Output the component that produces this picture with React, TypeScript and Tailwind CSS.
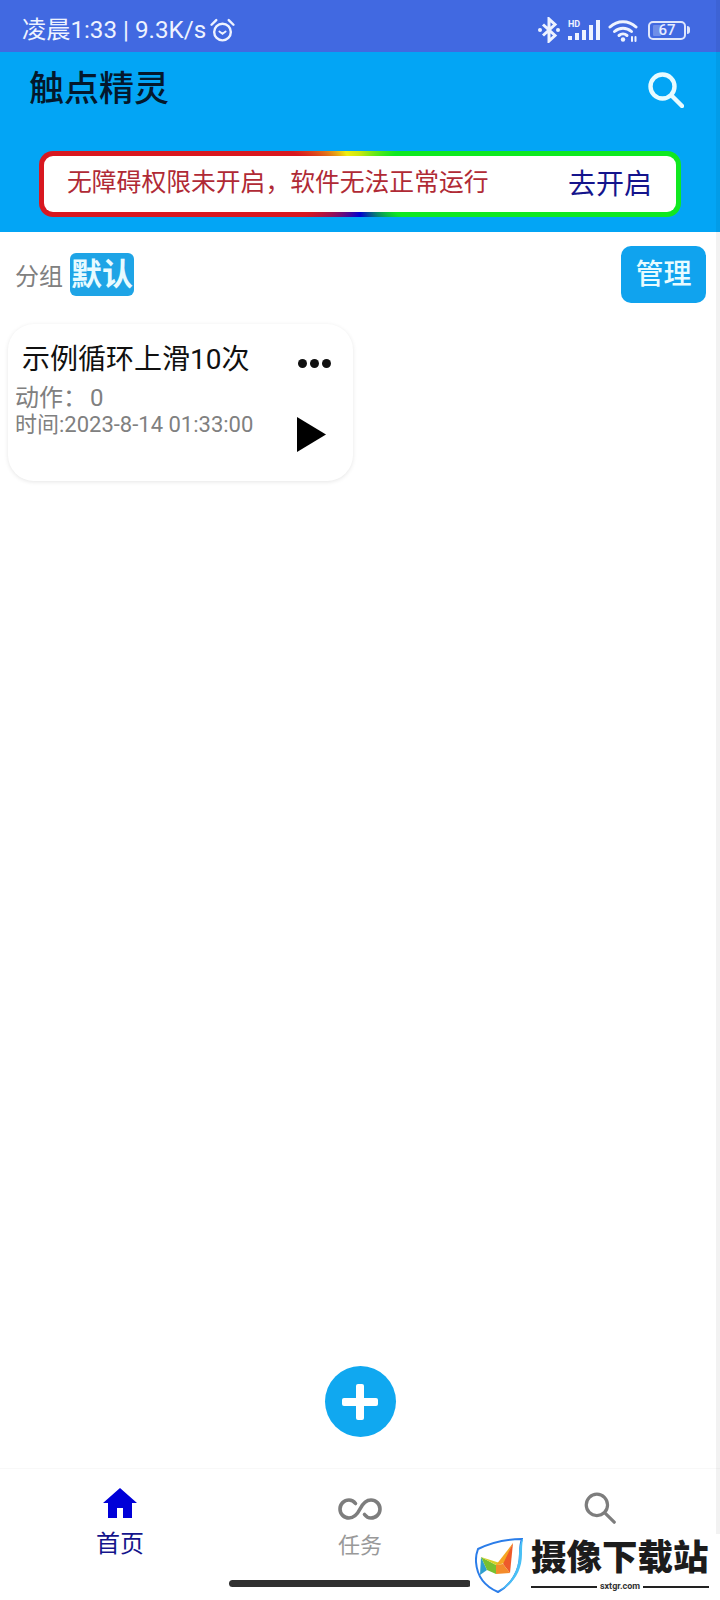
const CJK = "font-['Roboto','Noto_Sans_CJK_SC',sans-serif]"

function SearchGlyph({ size, color, stroke }: { size: number; color: string; stroke: number }) {
  return (
    <svg width={size} height={size} viewBox="0 0 36 36" fill="none" stroke={color} strokeWidth={stroke} strokeLinecap="round">
      <circle cx="14.5" cy="14.5" r="12" />
      <path d="M24 24 34 34" />
    </svg>
  )
}

function AlarmIcon() {
  return (
    <svg width="25" height="25" viewBox="0 0 24 24" fill="none" stroke="#eef3ff" strokeWidth="2.3" strokeLinecap="round">
      <circle cx="12" cy="13.5" r="8" />
      <path d="M1.5 6.5 6 2M22.5 6.5 18 2" />
      <path d="M9 13l3 2.2L15 13" strokeWidth="1.8" />
    </svg>
  )
}

function BluetoothIcon() {
  return (
    <svg width="22" height="26" viewBox="0 0 22 26" fill="none" stroke="#eef3ff" strokeWidth="3">
      <path d="M5 7.5l12 11-6 5.5V2l6 5.5L5 18.500" />
      <circle cx="2" cy="13" r="2" fill="#eef3ff" stroke="none" />
      <circle cx="20" cy="13" r="2" fill="#eef3ff" stroke="none" />
    </svg>
  )
}

function SignalIcon() {
  return (
    <div className="relative w-[32px] h-[20px]">
      <span className="absolute left-0 top-0 text-[9px] leading-none font-bold text-[#eef3ff]">HD</span>
      <div className="absolute inset-0 flex items-end justify-end gap-[3px]">
        <span className="w-[4px] h-[4px] bg-[#eef3ff]" />
        <span className="w-[4px] h-[7px] bg-[#eef3ff]" />
        <span className="w-[4px] h-[10px] bg-[#eef3ff]" />
        <span className="w-[4px] h-[15px] bg-[#eef3ff]" />
        <span className="w-[4px] h-[20px] bg-[#eef3ff]" />
      </div>
    </div>
  )
}

function WifiIcon() {
  return (
    <svg width="30" height="23" viewBox="0 0 30 23" fill="none" stroke="#eef3ff" strokeWidth="3" strokeLinecap="round">
      <path d="M2 8C9.500 1 20.500 1 28 8" />
      <path d="M6.500 12.500c5-4.500 12-4.500 17 0" />
      <path d="M11 16.500c2.300-2 5.700-2 8 0" />
      <circle cx="15" cy="20.500" r="2.200" fill="#eef3ff" stroke="none" />
      <path d="M24 18v4M27.500 18v4" strokeWidth="2" />
    </svg>
  )
}

function BatteryIcon() {
  return (
    <div className="flex items-center gap-[1px]">
      <div className="w-[38px] h-[19px] rounded-[5px] border-2 border-[#dfe6fb] flex items-center justify-center relative">
        <span className="absolute left-[3px] top-[2px] bottom-[2px] w-[8px] bg-[#6f8ee8] rounded-[1px]" />
        <span className="relative text-[15px] leading-none font-medium text-[#e6ecff]">67</span>
      </div>
      <span className="w-[3px] h-[8px] rounded-r-sm bg-[#dfe6fb]" />
    </div>
  )
}

function PlayIcon() {
  return (
    <svg width="29" height="35" viewBox="0 0 29 35">
      <path d="M0 0 29 17.500 0 35z" fill="#000" />
    </svg>
  )
}

function PlusGlyph() {
  return (
    <svg width="36" height="36" viewBox="0 0 36 36">
      <rect x="0" y="14" width="36" height="8" rx="2" fill="#fff" />
      <rect x="14" y="0" width="8" height="36" rx="2" fill="#fff" />
    </svg>
  )
}

function HomeIcon() {
  return (
    <svg width="34" height="31" viewBox="0 0 34 31">
      <path d="M17 0 34 15H29V30H20V20H14V30H5V15H0z" fill="#0000d8" />
    </svg>
  )
}

function InfinityIcon() {
  return (
    <svg width="44" height="24" viewBox="0 0 44 24" fill="none" stroke="#7d7d7d" strokeWidth="3.6" strokeLinecap="round">
      <path d="M17.500 6.500C16 4.500 13.500 3 11 3 6 3 2 7 2 12s4 9 9 9c6 0 9-5 11-9s5-9 11-9c5 0 9 4 9 9s-4 9-9 9c-2.500 0-5-1.500-6.500-3.500" />
    </svg>
  )
}

function ShieldLogo() {
  return (
    <svg width="48" height="56" viewBox="0 0 48 56">
      <path d="M3 11C15 5 32 1 47 1c-2 5-2 10-2 15 0 17-9 31-22 38C9 48 2 38 1 24c-.3-5 .5-9 2-13z" fill="#fff" stroke="#2b7de9" strokeWidth="2" />
      <path d="M47 1c-2 5-3 10-3 15 0 16-8 29-20 37 14-6 23-20 23-37 0-5 0-10 1-15z" fill="#49c0f5" />
      <path d="M6 19 5 37l7-5z" fill="#2f9fcf" />
      <path d="M6 19l6 13 9 4V27z" fill="#78c030" />
      <path d="M6 19l15 8 7-1z" fill="#d6cf28" />
      <path d="M21 27 38 5 30 25z" fill="#f6a623" />
      <path d="M38 5l-3 30-7-9z" fill="#ee5a2a" />
      <path d="M21 27l7-1 7 9-14 1z" fill="#f48b2a" />
    </svg>
  )
}

export default function App() {
  return (
    <div className={`w-[720px] h-[1600px] flex flex-col bg-white relative overflow-hidden ${CJK}`}>
      {/* status bar */}
      <div className="h-[52px] bg-[#4169e1] flex items-center justify-between pl-[22px] pr-[30px] pt-[8px] text-[#eef3ff]">
        <div className="flex items-center gap-[4px] text-[24.200px] leading-none">
          <span>凌晨1:33 | 9.3K/s</span>
          <AlarmIcon />
        </div>
        <div className="flex items-center gap-[8px]">
          <BluetoothIcon />
          <SignalIcon />
          <WifiIcon />
          <div className="ml-[2px]">
            <BatteryIcon />
          </div>
        </div>
      </div>

      {/* header with accessibility notice */}
      <div className="h-[180px] bg-[#03a5f5] flex flex-col">
        <div className="flex items-center justify-between pl-[29px] pr-[36px] pt-[18px]">
          <h1 className="text-[35px] leading-[40px] font-medium text-[#04182c]">触点精灵</h1>
          <SearchGlyph size={36} color="#e8fbff" stroke={4.4} />
        </div>
        <div className="mt-[41px] mx-[39px] h-[66px] p-[5px] rounded-[14px] bg-[conic-gradient(from_0deg,#c8e810_0deg,#10e820_50deg,#10e820_128deg,#0000d0_180deg,#d81820_241deg,#d81820_295deg,#f0ee10_336deg,#c8e810_360deg)]">
          <div className="h-full rounded-[9px] bg-white flex items-center justify-between pl-[23px] pr-[24px]">
            <span className="text-[24.800px] leading-none text-[#b02a35] -mt-[2px]">无障碍权限未开启，软件无法正常运行</span>
            <span className="text-[28px] leading-none text-[#14148c] mt-[2px]">去开启</span>
          </div>
        </div>
      </div>

      {/* group row */}
      <div className="flex items-center justify-between pl-[15px] pr-[14px] pt-[14px]">
        <div className="flex items-center gap-[7px]">
          <span className="text-[24px] leading-none text-[#808080] mt-[4px]">分组</span>
          <span className="w-[64px] h-[43px] rounded-[6px] bg-[#1ea4e6] flex items-center justify-center text-[31px] leading-none font-bold text-[#e8fbff] whitespace-nowrap">默认</span>
        </div>
        <button className="w-[85px] h-[57px] rounded-[10px] bg-[#10a3ee] text-[28px] leading-none font-medium text-[#e8fbff]">管理</button>
      </div>

      {/* task card */}
      <div className="mt-[21px] ml-[8px] w-[345px] h-[157px] rounded-[26px] bg-white shadow-[0_1px_4px_rgba(0,0,0,0.1)] flex justify-between pl-[7px] pr-[22px]">
        <div className="flex flex-col pt-[19px]">
          <span className="pl-[7px] text-[28px] leading-[34px] text-[#101010]">示例循环上滑10次</span>
          <span className="mt-[6px] text-[24px] leading-[30px] text-[#808080]">
            动作：<span className="ml-[3px]">0</span>
          </span>
          <span className="text-[22px] leading-[23px] text-[#808080]">时间:2023-8-14 01:33:00</span>
        </div>
        <div className="flex flex-col items-center pt-[35px]">
          <div className="flex gap-[3px]">
            <span className="w-[9px] h-[9px] rounded-full bg-[#101010]" />
            <span className="w-[9px] h-[9px] rounded-full bg-[#101010]" />
            <span className="w-[9px] h-[9px] rounded-full bg-[#101010]" />
          </div>
          <div className="mt-[49px] -ml-[7px]">
            <PlayIcon />
          </div>
        </div>
      </div>

      <div className="flex-1" />

      {/* add button */}
      <div className="flex justify-center pb-[31px]">
        <div className="w-[71px] h-[71px] rounded-full bg-[#10a8f0] flex items-center justify-center">
          <PlusGlyph />
        </div>
      </div>

      {/* bottom tabs */}
      <div className="h-[132px] border-t border-[#f8f8f8] grid grid-cols-3">
        <div className="flex flex-col items-center pt-[19px]">
          <HomeIcon />
          <span className="mt-[13px] text-[24px] leading-none text-[#14148c]">首页</span>
        </div>
        <div className="flex flex-col items-center pt-[28px]">
          <InfinityIcon />
          <span className="mt-[14px] text-[22px] leading-none text-[#999999]">任务</span>
        </div>
        <div className="flex flex-col items-center pt-[23px]">
          <SearchGlyph size={32} color="#7d7d7d" stroke={3.6} />
        </div>
      </div>

      {/* home indicator */}
      <div className="absolute left-[229px] top-[1580px] w-[242px] h-[7px] rounded-full bg-[#303030]" />

      {/* screen edge */}
      <div className="absolute right-0 top-0 bottom-[66px] w-[4px] bg-black/5" />

      {/* site watermark */}
      <div className="absolute right-0 bottom-0 w-[250px] h-[66px] bg-white flex items-start pl-[5px] pt-[4px] gap-[8px]">
        <ShieldLogo />
        <div className="flex flex-col w-[178px]">
          <span className="text-[35.500px] leading-[40px] font-black text-[#1c1c1c] whitespace-nowrap">摄像下载站</span>
          <div className="flex items-center gap-[3px] mt-[4px]">
            <span className="flex-1 h-[2px] bg-[#222]" />
            <span className="text-[9px] leading-none font-bold text-[#333]">sxtgr.com</span>
            <span className="flex-1 h-[2px] bg-[#222]" />
          </div>
        </div>
      </div>
    </div>
  )
}
